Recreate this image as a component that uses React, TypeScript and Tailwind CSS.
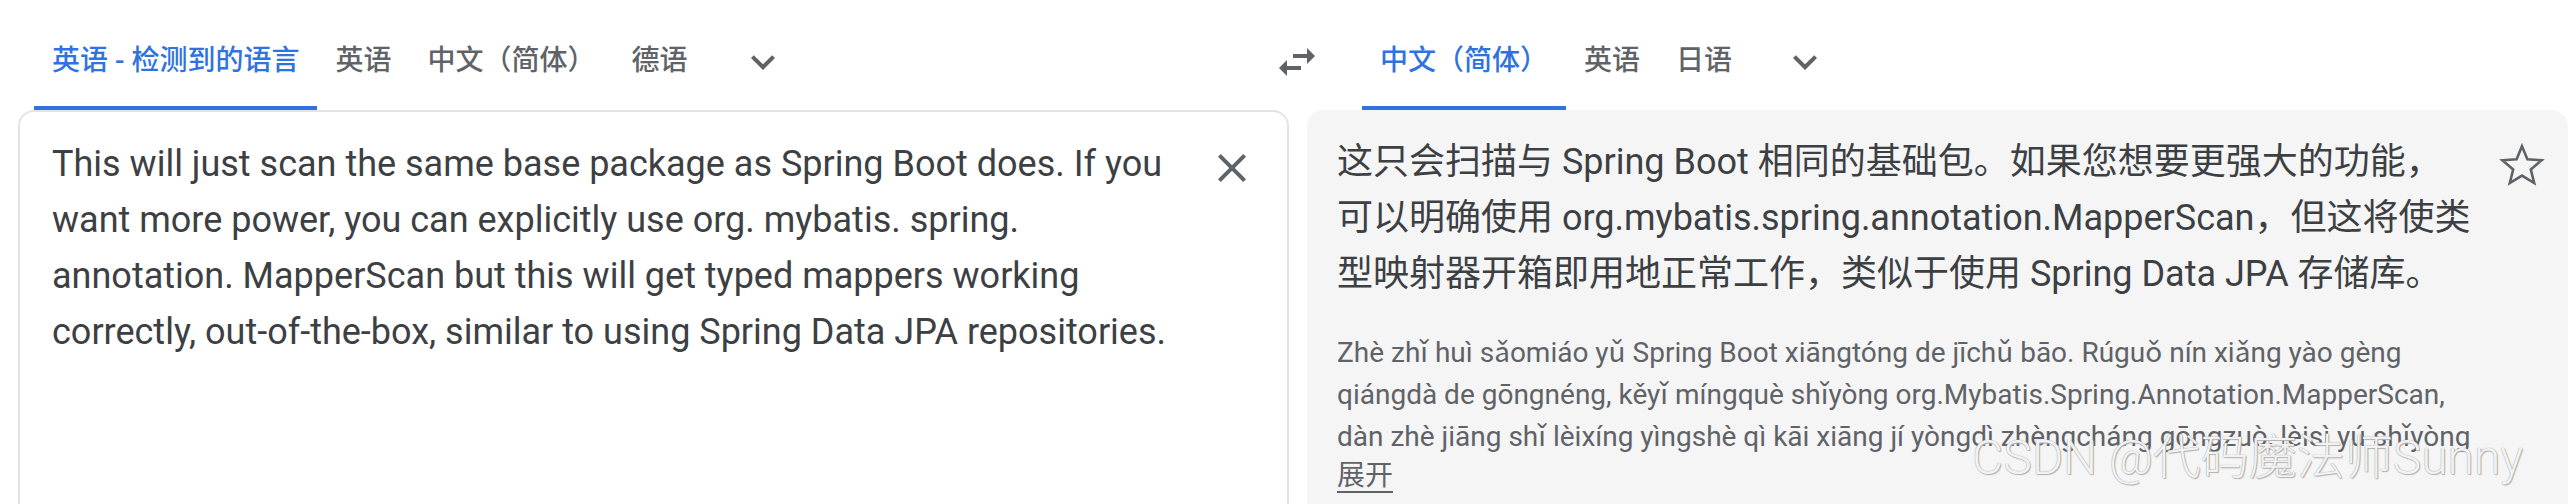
import React from 'react';

const LEFT_TABS = ['英语 - 检测到的语言', '英语', '中文（简体）', '德语'];
const RIGHT_TABS = ['中文（简体）', '英语', '日语'];

const SOURCE_TEXT =
  'This will just scan the same base package as Spring Boot does. If you want more power, you can explicitly use org. mybatis. spring. annotation. MapperScan but this will get typed mappers working correctly, out-of-the-box, similar to using Spring Data JPA repositories.';

const TARGET_TEXT =
  '这只会扫描与 Spring Boot 相同的基础包。如果您想要更强大的功能，可以明确使用 org.mybatis.spring.annotation.MapperScan，但这将使类型映射器开箱即用地正常工作，类似于使用 Spring Data JPA 存储库。';

const PINYIN =
  'Zhè zhǐ huì sǎomiáo yǔ Spring Boot xiāngtóng de jīchǔ bāo. Rúguǒ nín xiǎng yào gèng qiángdà de gōngnéng, kěyǐ míngquè shǐyòng org.Mybatis.Spring.Annotation.MapperScan, dàn zhè jiāng shǐ lèixíng yìngshè qì kāi xiāng jí yòngdì zhèngcháng gōngzuò, lèisì yú shǐyòng';

function Tab({ label, active = false }: { label: string; active?: boolean }) {
  return (
    <div
      className={
        active
          ? 'flex h-[110px] items-center whitespace-pre border-b-4 border-[#2f73e0] px-[18px] pt-[16px] text-[28px] font-medium text-[#2f73e0]'
          : 'flex h-[110px] items-center whitespace-pre border-b-4 border-transparent px-[18px] pt-[16px] text-[28px] font-medium text-[#5f6368]'
      }
    >
      {label}
    </div>
  );
}

function Chevron({ className }: { className: string }) {
  return (
    <div className={className}>
      <svg viewBox="0 0 24 24" className="h-[48px] w-[48px] fill-[#5f6368]">
        <path d="M16.59 8.59L12 13.17 7.41 8.59 6 10l6 6 6-6z" />
      </svg>
    </div>
  );
}

export default function App() {
  return (
    <div className="relative h-[504px] w-[2570px] overflow-hidden bg-white font-['Roboto','Noto_Sans_CJK_SC',sans-serif]">
      {/* language bar */}
      <div className="flex h-[110px]">
        <div className="flex w-[1262px] pl-[34px]">
          {LEFT_TABS.map((t, i) => (
            <Tab key={t} label={t} active={i === 0} />
          ))}
          <Chevron className="ml-[26px] flex h-[110px] w-[64px] items-center justify-center pt-[14px]" />
        </div>
        <div className="flex w-[70px] items-center justify-center pt-[14px]">
          <svg viewBox="0 0 24 24" className="h-[48px] w-[48px] fill-[#5f6368]">
            <path d="M6.99 11L3 15l3.99 4v-3H14v-2H6.99v-3zM21 9l-3.99-4v3H10v2h7.01v3L21 9z" />
          </svg>
        </div>
        <div className="flex flex-1 pl-[30px]">
          {RIGHT_TABS.map((t, i) => (
            <Tab key={t} label={t} active={i === 0} />
          ))}
          <Chevron className="ml-[23px] flex h-[110px] w-[64px] items-center justify-center pt-[14px]" />
        </div>
      </div>

      {/* panels */}
      <div className="flex gap-[18px] pl-[18px] pr-[2px]">
        <section className="flex h-[430px] w-[1271px] shrink-0 gap-[13px] rounded-[16px] border-2 border-[#e3e3e3] pl-[32px] pr-[31px]">
          <p className="flex-1 pt-[24px] text-[36px] leading-[56px] text-[#3c4043]">{SOURCE_TEXT}</p>
          <button type="button" className="mt-[32px] h-[48px] w-[48px] shrink-0">
            <svg viewBox="0 0 24 24" className="h-[48px] w-[48px] fill-[#5f6368]">
              <path d="M19 6.41L17.59 5 12 10.59 6.41 5 5 6.41 10.59 12 5 17.59 6.41 19 12 13.41 17.59 19 19 17.59 13.41 12z" />
            </svg>
          </button>
        </section>

        <section className="flex h-[430px] flex-1 gap-[22px] rounded-[16px] bg-[#f5f5f5] pl-[30px] pr-[22px]">
          <div className="flex-1 pt-[24px]">
            <p className="text-[36px] leading-[56px] text-[#3c4043]">{TARGET_TEXT}</p>
            <p className="mt-[30px] text-[28px] leading-[42px] text-[#5f6368]">{PINYIN}</p>
            <p className="-mt-[3px] text-[28px] leading-[42px] text-[#5f6368] underline underline-offset-[6px]">展开</p>
          </div>
          <button type="button" className="mt-[31px] h-[48px] w-[48px] shrink-0">
            <svg viewBox="0 0 24 24" className="h-[48px] w-[48px] fill-none stroke-[#5f6368]" strokeWidth={1.3}>
              <polygon points="12,2.6 14.7,9.1 21.8,9.6 16.4,14.2 18.1,21 12,17.3 5.9,21 7.6,14.2 2.2,9.6 9.3,9.1" />
            </svg>
          </button>
        </section>
      </div>

      {/* watermark */}
      <div className="pointer-events-none absolute left-[1972px] top-[434px] whitespace-nowrap text-[48px] font-light leading-[48px] text-[#f2f2f2] [text-shadow:0_0_1px_#8a8a8a,1px_1px_1px_#b5b5b5]">
        CSDN @代码魔法师Sunny
      </div>
    </div>
  );
}
